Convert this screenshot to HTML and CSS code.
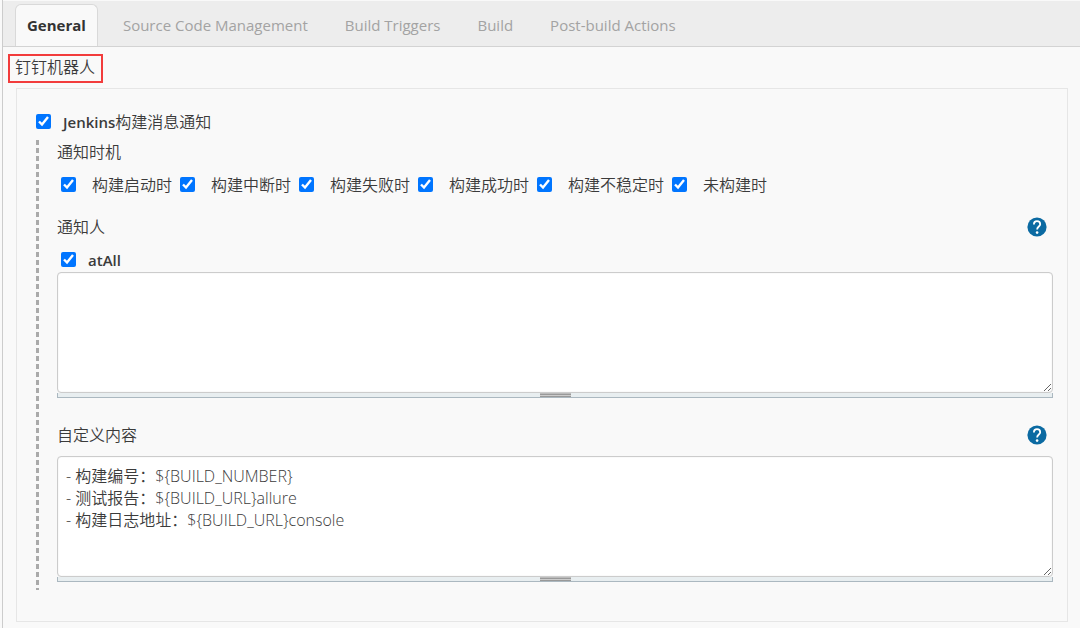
FILE: index.html
```html
<!DOCTYPE html>
<html lang="zh-CN">
<head>
<meta charset="utf-8">
<meta name="viewport" content="width=device-width, initial-scale=1">
<title>General</title>
<link rel="stylesheet" href="styles.css">
</head>
<body>
<main class="config">
  <nav class="tabs">
    <a class="tab tab-active" href="#general">General</a>
    <a class="tab" href="#scm">Source Code Management</a>
    <a class="tab" href="#triggers">Build Triggers</a>
    <a class="tab" href="#build">Build</a>
    <a class="tab" href="#post">Post-build Actions</a>
  </nav>
  <h1 class="section-title">钉钉机器人</h1>
  <section class="panel" id="general">
    <label class="check check-main"><input type="checkbox" checked><span><b class="latin">Jenkins</b>构建消息通知</span></label>
    <div class="nested">
      <h2 class="field-name">通知时机</h2>
      <div class="occasions">
        <label class="check"><input type="checkbox" checked><span>构建启动时</span></label>
        <label class="check"><input type="checkbox" checked><span>构建中断时</span></label>
        <label class="check"><input type="checkbox" checked><span>构建失败时</span></label>
        <label class="check"><input type="checkbox" checked><span>构建成功时</span></label>
        <label class="check"><input type="checkbox" checked><span>构建不稳定时</span></label>
        <label class="check"><input type="checkbox" checked><span>未构建时</span></label>
      </div>
      <div class="field-head">
        <label class="field-name" for="people">通知人</label>
        <button class="help" type="button" aria-label="Help">
          <svg viewBox="0 0 20 20" width="20" height="20"><circle cx="10" cy="10" r="9.6" fill="#0b6aa2"/><path d="M6.9 7.4C6.9 5.5 8.2 4.2 10 4.2s3.2 1.2 3.2 3c0 2.2-3.1 2.4-3.1 5.2" fill="none" stroke="#fff" stroke-width="1.8"/><circle cx="10.1" cy="15.6" r="1.3" fill="#fff"/></svg>
        </button>
      </div>
      <label class="check check-all"><input type="checkbox" checked><b class="latin">atAll</b></label>
      <div class="editor">
        <textarea class="text" id="people"></textarea>
        <div class="grip"></div>
      </div>
      <div class="field-head field-head-content">
        <label class="field-name" for="content">自定义内容</label>
        <button class="help" type="button" aria-label="Help">
          <svg viewBox="0 0 20 20" width="20" height="20"><circle cx="10" cy="10" r="9.6" fill="#0b6aa2"/><path d="M6.9 7.4C6.9 5.5 8.2 4.2 10 4.2s3.2 1.2 3.2 3c0 2.2-3.1 2.4-3.1 5.2" fill="none" stroke="#fff" stroke-width="1.8"/><circle cx="10.1" cy="15.6" r="1.3" fill="#fff"/></svg>
        </button>
      </div>
      <div class="editor">
        <textarea class="text" id="content">- 构建编号：${BUILD_NUMBER}
- 测试报告：${BUILD_URL}allure
- 构建日志地址：${BUILD_URL}console</textarea>
        <div class="grip"></div>
      </div>
    </div>
  </section>
</main>
</body>
</html>
```

FILE: styles.css
```css
* {
  box-sizing: border-box;
}

body {
  margin: 0;
  background: #f9f9f9;
  color: #3b3b3b;
  font: 350 16px/22px "Open Sans", "Noto Sans CJK SC", sans-serif;
}

.config {
  min-height: 100vh;
  margin-left: 2px;
  padding-bottom: 5px;
  border-left: 1px solid #ccc;
}

.tabs {
  display: flex;
  align-items: flex-end;
  gap: 13px;
  height: 47px;
  padding-left: 12px;
  border-top: 1px solid #f9f9f9;
  border-bottom: 1px solid #d3d3d3;
  background: #ededed;
  font-size: 15px;
  font-weight: 400;
}

.tab {
  height: 42px;
  padding: 10px 12px 0;
  color: #a3a3a3;
  text-decoration: none;
  white-space: nowrap;
}

.tab-active {
  padding: 9px 11px 0;
  border: 1px solid #d9d9d9;
  border-bottom: 0;
  border-radius: 6px 6px 0 0;
  background: #f9f9f9;
  color: #333;
  font-weight: 700;
}

.section-title {
  width: fit-content;
  margin: 7px 0 5px 5px;
  padding: 0 6px 3px 5px;
  border: 2px solid #f23c3c;
  font-size: 16px;
  font-weight: 350;
}

.panel {
  margin: 0 12px 0 13px;
  padding: 22px 14px 31px 19px;
  border: 1px solid #e6e6e6;
}

.check {
  display: flex;
  align-items: center;
  gap: 16px;
}

.check input {
  width: 15px;
  height: 15px;
  margin: 0 0 2px;
  accent-color: #0075ff;
}

.check-main {
  gap: 12px;
}

.latin {
  font-size: 15px;
  font-weight: 600;
}

.nested {
  margin-top: 7px;
  padding: 1px 0 0 21px;
  background: repeating-linear-gradient(#aaa 0 5px, transparent 5px 8px) left top / 3px 100% no-repeat;
}

.field-name {
  margin: 0;
  font-size: 16px;
  font-weight: 350;
}

.occasions {
  display: flex;
  flex-wrap: wrap;
  gap: 8px;
  padding: 11px 0 0 4px;
}

.field-head {
  display: flex;
  align-items: center;
  justify-content: space-between;
  margin-top: 20px;
  padding-right: 6px;
}

.field-head-content {
  margin-top: 18px;
  margin-bottom: 10px;
}

.help {
  display: flex;
  padding: 0;
  border: 0;
  background: none;
}

.check-all {
  gap: 12px;
  margin: 11px 0 1px 4px;
}

.editor {
  padding-bottom: 8px;
}

.text {
  display: block;
  width: 100%;
  height: 121px;
  padding: 8px;
  border: 1px solid #ccc;
  border-radius: 4px;
  background: #fff;
  box-shadow: inset 0 0 1px #ccc;
  color: #3b3b3b;
  font: inherit;
  resize: vertical;
}

.grip {
  height: 5px;
  border: 1px solid #abb8c0;
  border-top: 0;
  background: linear-gradient(#bbb 0 1px, #999 1px 2px, #ccc 2px 3px, #999 3px 4px) center / 31px 100% no-repeat #e8eef0;
}
```
